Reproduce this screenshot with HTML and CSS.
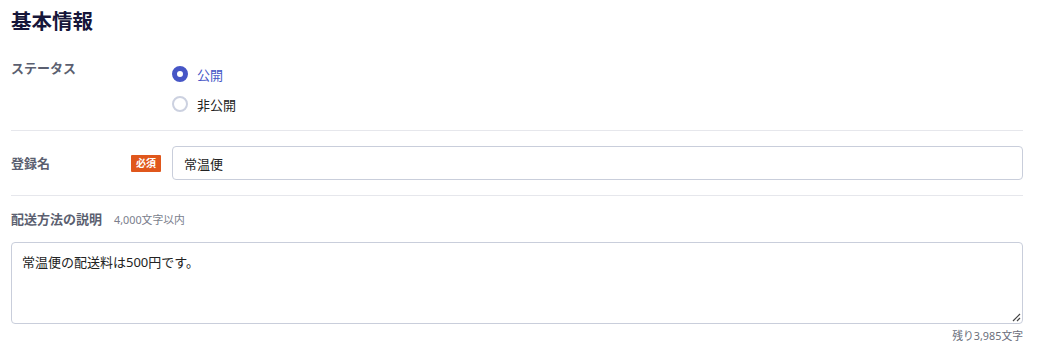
FILE: index.html
```html
<!DOCTYPE html>
<html lang="ja">
<head>
<meta charset="utf-8">
<link rel="stylesheet" href="styles.css">
</head>
<body>
<section class="panel">
  <h2 class="title">基本情報</h2>
  <div class="row row-status">
    <div class="label-col"><span class="label">ステータス</span></div>
    <div class="radios">
      <label class="radio checked"><span class="dot"></span><span class="radio-text">公開</span></label>
      <label class="radio"><span class="dot"></span><span class="radio-text">非公開</span></label>
    </div>
  </div>
  <div class="row row-name">
    <div class="label-col"><span class="label">登録名</span><span class="badge">必須</span></div>
    <div class="input">常温便</div>
  </div>
  <div class="block-desc">
    <div class="desc-head"><span class="label">配送方法の説明</span><span class="hint">4,000文字以内</span></div>
    <div class="textarea">常温便の配送料は500円です。
      <svg class="grip" width="10" height="10" viewBox="0 0 10 10"><path d="M2 9 L9 2 M6 9 L9 6" stroke="#444" stroke-width="1.2" fill="none"/></svg>
    </div>
    <div class="counter">残り3,985文字</div>
  </div>
</section>
</body>
</html>
```

FILE: styles.css
```css
* { box-sizing: border-box; }
body {
  margin: 0;
  background: #fff;
  font-family: "Noto Sans", "Noto Sans CJK JP", sans-serif;
  color: #222;
}
.panel {
  width: 1012px;
  margin-left: 11px;
  padding-top: 6px;
}
.title {
  margin: 0;
  font-size: 20.5px;
  line-height: 30px;
  font-weight: 700;
  color: #16163a;
}
.row {
  display: flex;
  border-bottom: 1px solid #e6e7ec;
}
.label-col {
  width: 161px;
  display: flex;
  justify-content: space-between;
  align-items: center;
  padding-right: 11px;
}
.label {
  font-size: 13px;
  font-weight: 700;
  color: #5b5f70;
  line-height: 20px;
}
.row-status {
  padding-top: 21px;
  padding-bottom: 16px;
  align-items: flex-start;
}
.row-status .label-col { align-items: flex-start; padding-top: 1px; }
.radios {
  display: flex;
  flex-direction: column;
  gap: 10px;
  padding-top: 7px;
}
.radio {
  display: flex;
  align-items: center;
  gap: 9px;
  height: 20px;
  font-size: 13px;
  color: #222;
}
.dot {
  width: 16px;
  height: 16px;
  border-radius: 50%;
  border: 2px solid #ccd1e0;
  background: #fff;
}
.radio.checked .dot { border: 5px solid #4656c6; }
.radio.checked .radio-text { color: #4656c6; }
.row-name {
  padding: 15px 0 15px;
  align-items: center;
}
.badge {
  background: #e0571c;
  color: #fff;
  font-size: 10px;
  font-weight: 700;
  line-height: 17px;
  padding: 0 5px;
  border-radius: 1px;
}
.input {
  flex: 1;
  height: 34px;
  border: 1px solid #c9cedb;
  border-radius: 4px;
  padding: 0 11px;
  display: flex;
  align-items: center;
  font-size: 13px;
  color: #222;
}
.block-desc { padding-top: 13px; }
.desc-head {
  display: flex;
  align-items: baseline;
  gap: 12px;
}
.hint {
  font-size: 10.8px;
  color: #7a7e8c;
}
.textarea {
  position: relative;
  margin-top: 13px;
  height: 82px;
  border: 1px solid #c9cedb;
  border-radius: 4px;
  padding: 9px 10px;
  font-size: 13px;
  line-height: 20px;
  color: #222;
}
.grip { position: absolute; right: 1px; bottom: 1px; }
.counter {
  text-align: right;
  font-size: 10.8px;
  color: #6b6f7c;
  margin-top: 3px;
}
```
